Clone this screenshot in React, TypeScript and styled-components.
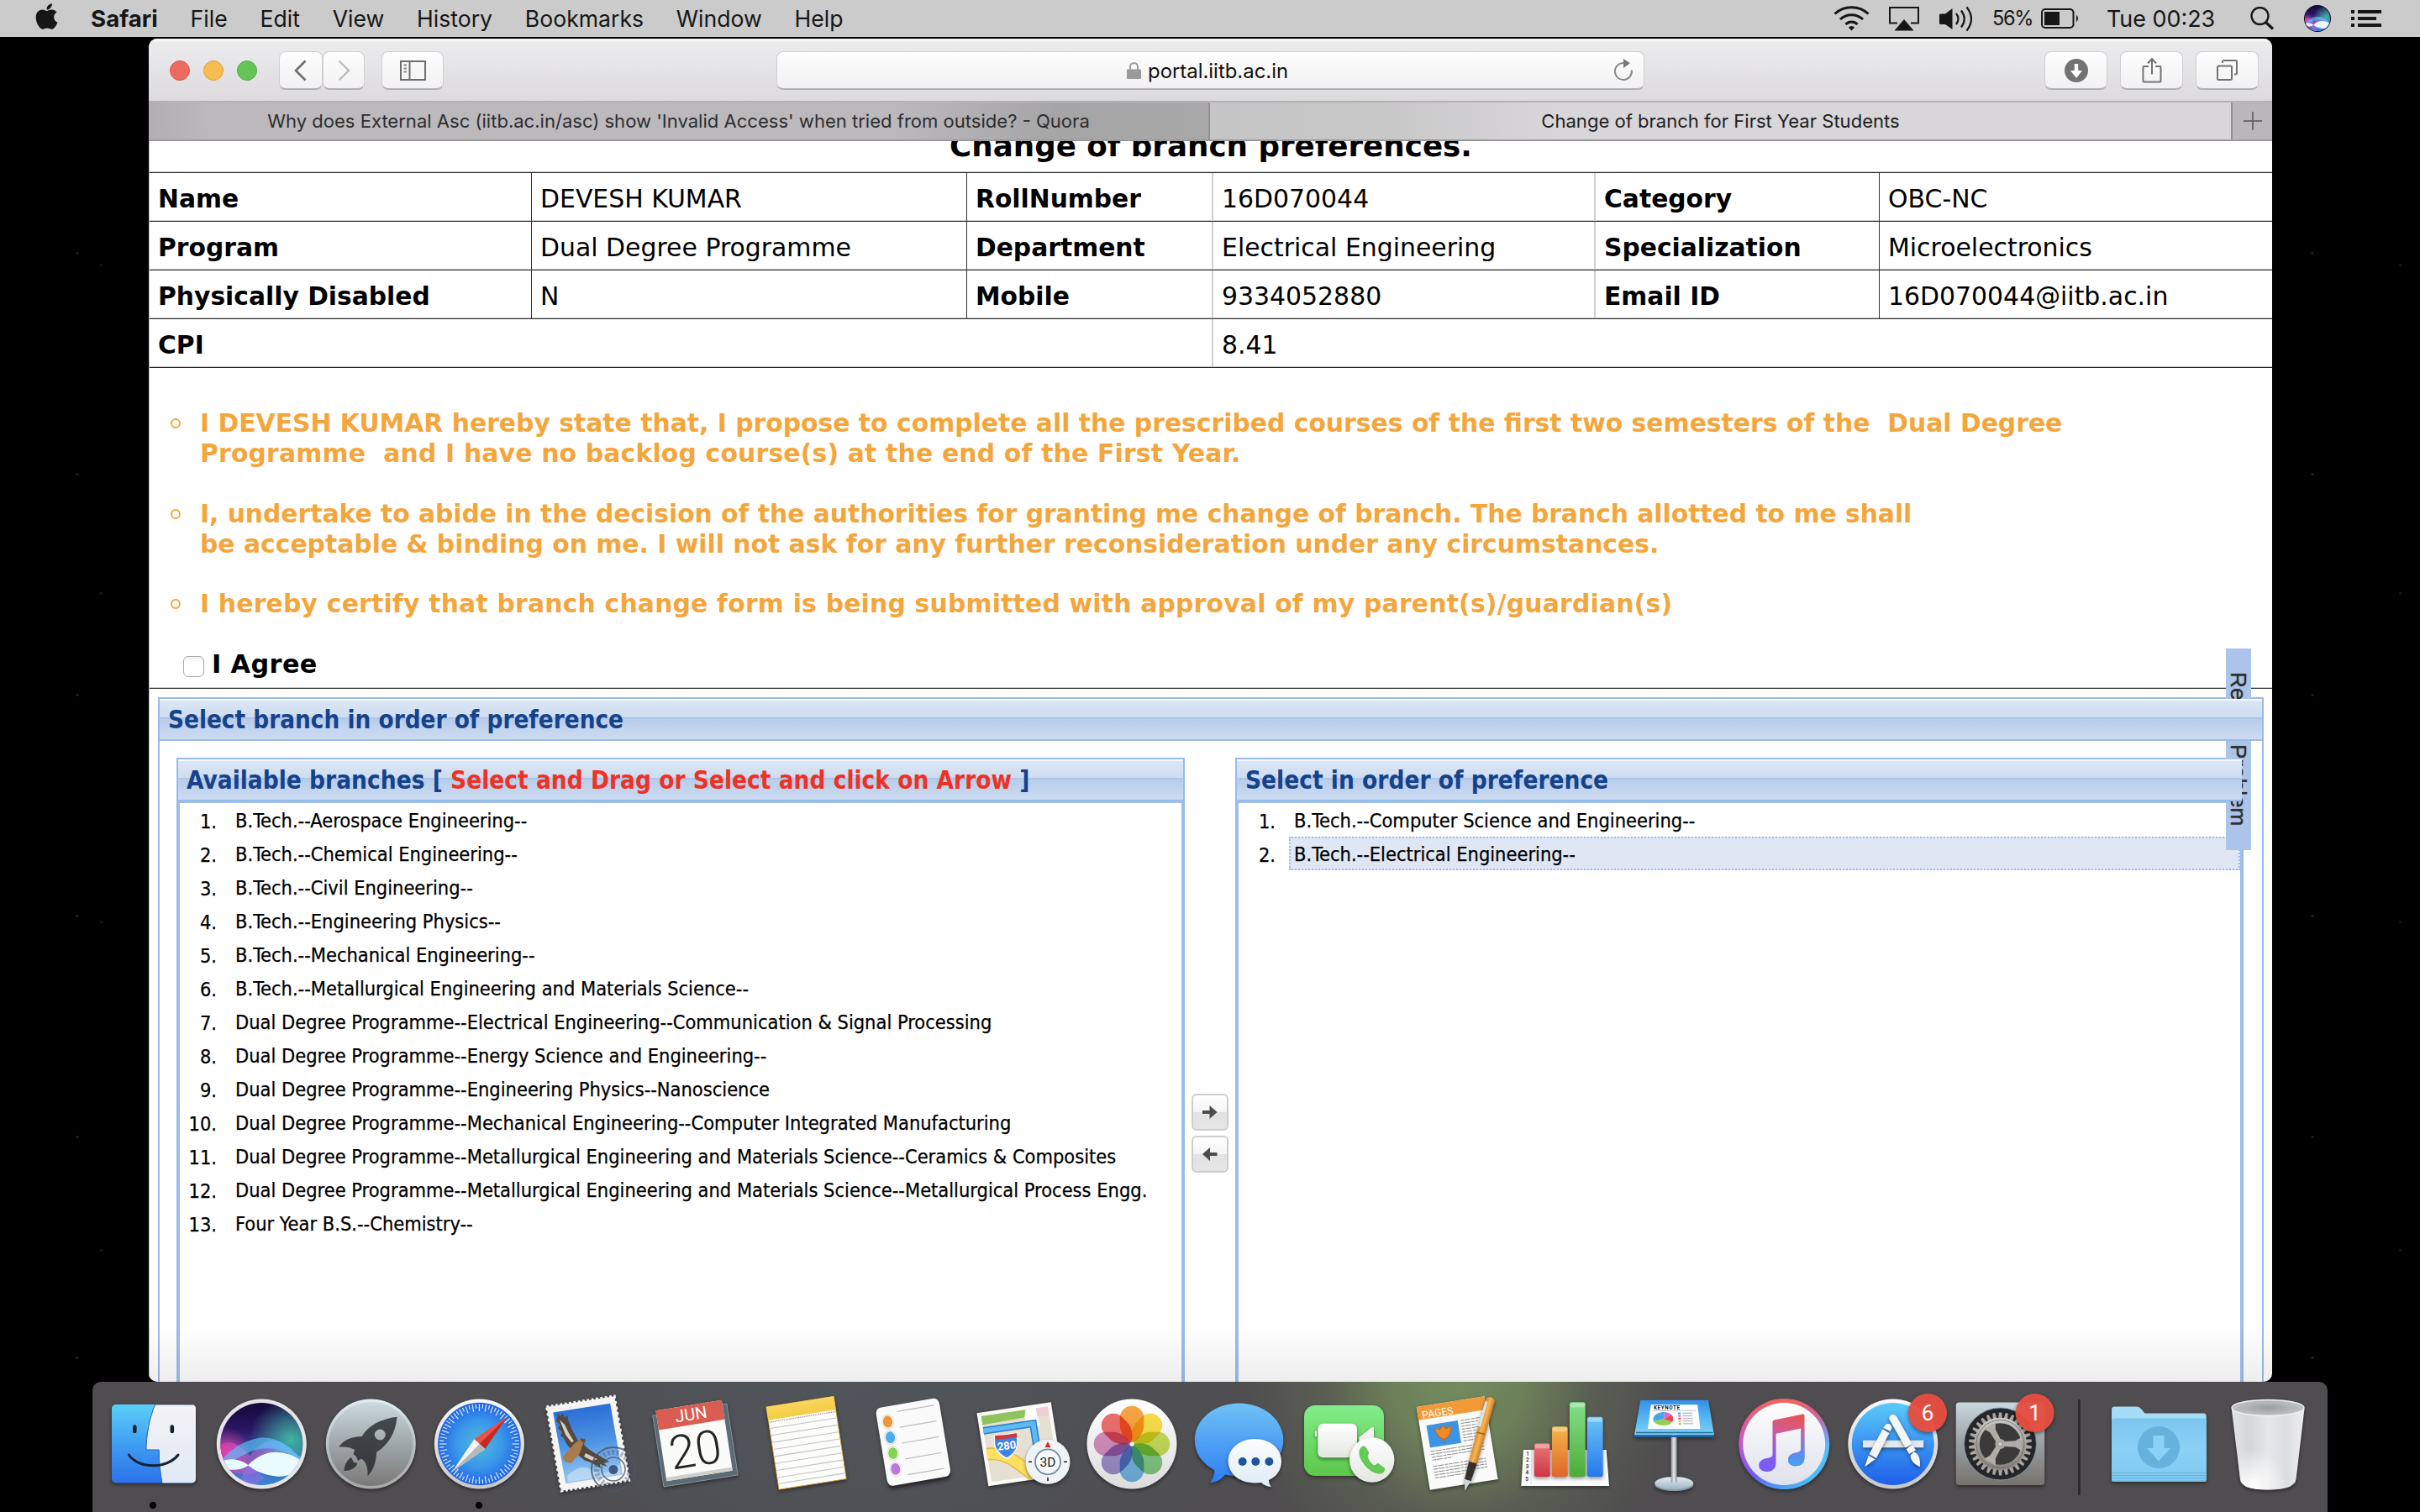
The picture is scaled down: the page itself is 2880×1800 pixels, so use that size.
import React from 'react';
import styled, { createGlobalStyle } from 'styled-components';
import { FaApple } from 'react-icons/fa';

const verdana = '"DejaVu Sans", Verdana, sans-serif';
const tahoma = '"DejaVu Sans Condensed", Tahoma, sans-serif';
const system = 'Inter, "Helvetica Neue", sans-serif';
const line = '#99bbe8';

const GlobalStyle = createGlobalStyle`
  *, *::before, *::after { box-sizing: border-box; }
  body { margin: 0; background: #000; }
`;

const Desktop = styled.div`
  width: 2880px;
  height: 1800px;
  overflow: hidden;
  display: flex;
  flex-direction: column;
  background:
    radial-gradient(circle, #1f2330 0 1px, transparent 2px) 22px 170px / 140px 263px,
    radial-gradient(circle, #101628 0 1px, transparent 2px) 35px 120px / 171px 391px,
    #000;
`;

/* ---------- menu bar ---------- */
const MenuBar = styled.header`
  flex: none;
  height: 44px;
  padding: 0 46px 0 42px;
  display: flex;
  align-items: center;
  background: #cbcbcb;
  color: #161616;
  font-family: ${system};
`;
const AppleMark = styled.span`
  width: 27px;
  display: flex;
  justify-content: center;
  font-size: 35px;
  margin: -5px 39px 0 0;
`;
const Menus = styled.nav`
  display: flex;
  gap: 38.8px;
`;
const MenuItem = styled.span<{ $app?: boolean }>`
  font-size: ${p => (p.$app ? '27.7px' : '26.6px')};
  font-weight: ${p => (p.$app ? 700 : 400)};
  line-height: 44px;
`;
const Extras = styled.div`
  margin-left: auto;
  display: flex;
  align-items: center;
`;
const Extra = styled.svg<{ $gap: number }>`
  flex: none;
  display: block;
  margin-left: ${p => p.$gap}px;
`;
const Percent = styled.span`
  width: 48px;
  margin-left: 22px;
  font-size: 23.6px;
  line-height: 44px;
  letter-spacing: -1.3px;
  white-space: nowrap;
`;
const Clock = styled.span`
  width: 131px;
  margin-left: 32px;
  margin-right: 1px;
  font-size: 26.9px;
  line-height: 44px;
  white-space: nowrap;
`;

/* ---------- browser window ---------- */
const Window = styled.main`
  flex: none;
  width: 2527px;
  height: 1599px;
  margin: 2px 0 0 177px;
  display: flex;
  flex-direction: column;
  overflow: hidden;
  border-radius: 10px;
  background: #fff;
`;
const Toolbar = styled.div`
  flex: none;
  height: 74px;
  padding: 0 16px 0 25px;
  display: flex;
  align-items: center;
  background: linear-gradient(#f8f7f8 0 2px, #ecebee 4px, #dcdadd);
`;
const Lights = styled.div`
  display: flex;
  gap: 16px;
  margin: 2px 26px 0 0;
`;
const Light = styled.i<{ $c: string; $edge: string }>`
  width: 24px;
  height: 24px;
  border-radius: 50%;
  background: ${p => p.$c};
  border: 1px solid ${p => p.$edge};
`;
const ToolButton = styled.button<{ $w: number; $mr?: number }>`
  width: ${p => p.$w}px;
  height: 46px;
  margin: 2px ${p => p.$mr ?? 0}px 0 0;
  padding: 0;
  display: flex;
  align-items: center;
  justify-content: center;
  border: 1px solid #d0ced1;
  border-bottom: 2px solid #b2b0b3;
  border-radius: 8px;
  background: linear-gradient(#fefefe, #f2f1f2);
  color: #737373;
`;
const AddressField = styled.div`
  width: 1033px;
  height: 46px;
  margin: 2px 0 0 396px;
  padding: 0 12px 0 416px;
  display: flex;
  align-items: center;
  border: 1px solid #d0ced1;
  border-bottom: 2px solid #b2b0b3;
  border-radius: 8px;
  background: linear-gradient(#fefefe, #f2f1f2);
  font: 23.9px/44px ${system};
  color: #111;
`;
const Host = styled.span`
  margin: 3px auto 0 8px;
`;
const RightTools = styled.div`
  margin-left: auto;
  display: flex;
  gap: 15px;
`;
const TabBar = styled.div`
  flex: none;
  height: 48px;
  display: flex;
  border-top: 2px solid #b3b1b4;
  border-bottom: 2px solid #9b999c;
  font: 22.05px/44px ${system};
  text-align: center;
`;
const Tab = styled.div<{ $active?: boolean }>`
  width: ${p => (p.$active ? 1217 : 1263)}px;
  border-right: 2px solid #929093;
  color: ${p => (p.$active ? '#202020' : '#2e2d2f')};
  white-space: nowrap;
  background: ${p =>
    p.$active
      ? 'linear-gradient(90deg, #c6c5c6, #c9c8c9 18%, #d8d6d9 34%, #d8d6d9)'
      : 'linear-gradient(90deg, #b1afb2, #bbb9bc 6%, #bbb9bc 70%, #a6a5a6 86%, #a9a8a9)'};
`;
const NewTab = styled.div`
  flex: 1;
  display: flex;
  align-items: center;
  justify-content: center;
  background: #b9b7ba;
`;

/* ---------- page ---------- */
const Page = styled.div`
  position: relative;
  flex: 1;
  min-height: 0;
  overflow: hidden;
  display: flex;
  flex-direction: column;
  border-left: 1px solid #b9b9b9;
  font-family: ${verdana};
  font-size: 29.9px;
  color: #000;
  &::after {
    content: '';
    position: absolute;
    z-index: 5;
    inset: auto 0 0 0;
    height: 66px;
    background: linear-gradient(rgba(60, 60, 60, 0), rgba(60, 60, 60, 0.09));
  }
`;
const TitleRow = styled.div`
  flex: none;
  height: 38px;
  display: flex;
  align-items: flex-end;
  justify-content: center;
  box-shadow: inset 0 -1px #2c2c2c, inset 0 -2px #c8c8c8;
`;
const Title = styled.h1`
  margin: 0;
  font-size: 35.7px;
  line-height: 65px;
  font-weight: 700;
`;
const InfoRow = styled.div`
  flex: none;
  height: 58px;
  display: grid;
  grid-template-columns: 455px 518px 293px 455px 338px 1fr;
  box-shadow: inset 0 -1px #2c2c2c, inset 0 -2px #c8c8c8;
`;
const Cell = styled.div<{ $rule?: 'dark' | 'light'; $span?: number }>`
  grid-column: span ${p => p.$span ?? 1};
  height: 57px;
  padding: 3px 0 0 10px;
  line-height: 56px;
  white-space: nowrap;
  border-right: ${p =>
    p.$rule === 'dark' ? '1px solid #333' : p.$rule === 'light' ? '2px solid #cfcfcf' : 'none'};
`;
const Label = styled(Cell)`
  font-weight: 700;
  font-size: 29.75px;
`;
const Pledges = styled.ul`
  flex: none;
  margin: 0;
  padding: 48px 0 0 25px;
  height: 286px;
  list-style: none;
  color: #f4a63d;
  font-weight: 700;
  font-size: 29.82px;
  line-height: 36px;
`;
const Pledge = styled.li`
  display: grid;
  grid-template-columns: 12px 1fr;
  column-gap: 23px;
  margin-bottom: 35.7px;
  white-space: pre;
  &::before {
    content: '';
    grid-row: span 2;
    width: 12px;
    height: 12px;
    margin-top: 12px;
    border: 2px solid #f4a63d;
    border-radius: 50%;
  }
`;
const PledgeLine = styled.span<{ $track?: number }>`
  grid-column: 2;
  letter-spacing: ${p => p.$track ?? 0}px;
`;
const Agree = styled.label`
  flex: none;
  height: 96px;
  padding: 42px 0 0 40px;
  display: flex;
  align-items: flex-start;
  gap: 9px;
  font-weight: 700;
  font-size: 30.3px;
  line-height: 50px;
  letter-spacing: 0.4px;
  box-shadow: inset 0 -1px #2c2c2c, inset 0 -2px #c8c8c8;
`;
const CheckBox = styled.input`
  appearance: none;
  width: 25px;
  height: 25px;
  margin: 15px 0 0;
  border: 1.5px solid #aaa;
  border-radius: 6px;
  background: linear-gradient(#f2f2f2, #fff 30%);
`;
const Outer = styled.section`
  flex: 1;
  min-height: 0;
  margin: 10px 10px 0 10px;
  display: flex;
  flex-direction: column;
  border: 2px solid ${line};
  border-bottom: 0;
`;
const PanelHead = styled.h2<{ $inner?: boolean }>`
  position: relative;
  z-index: 2;
  flex: none;
  height: 50px;
  margin: 0;
  padding-left: 10px;
  border-bottom: 2px solid ${line};
  background: linear-gradient(#f4f8fd 0 2px, #dae6f4 2px, #cfddf0 22px, #adc5e9 22px 24px, #b9cdea 24px, #ccdbf1);
  font: 700 ${p => (p.$inner ? 29.5 : 29.35)}px/51px ${tahoma};
  color: #15428b;
  white-space: pre;
`;
const Hint = styled.span`
  color: #ee3124;
`;
const Selector = styled.div`
  flex: 1;
  min-height: 0;
  display: grid;
  grid-template-columns: 1200px 60px 1200px;
  padding: 20px 0 0 20px;
`;
const Panel = styled.div`
  display: flex;
  flex-direction: column;
  border: 2px solid ${line};
  border-bottom: 0;
`;
const PanelBody = styled.div`
  flex: 1;
  border: 2px solid #9dbff0;
  border-bottom: 0;
`;
const Branch = styled.div`
  height: 40px;
  display: grid;
  grid-template-columns: 60px 1fr;
  font: 23.42px/40px ${tahoma};
  -webkit-text-stroke: 0.25px #000;
`;
const Num = styled.span`
  width: 44px;
  padding-top: 2px;
  text-align: right;
`;
const BranchName = styled.span<{ $selected?: boolean }>`
  height: 40px;
  padding-left: 4px;
  line-height: 39px;
  border: 2px dotted ${p => (p.$selected ? '#a3bae9' : 'transparent')};
  background: ${p => (p.$selected ? '#dfe7f5' : 'transparent')};
  white-space: nowrap;
`;
const Movers = styled.div`
  display: flex;
  flex-direction: column;
  align-items: center;
  gap: 6px;
  padding-top: 400px;
`;
const Mover = styled.button`
  width: 44px;
  height: 44px;
  padding: 0;
  display: flex;
  align-items: center;
  justify-content: center;
  border: 2px solid #cdcdcd;
  border-radius: 6px;
  background: linear-gradient(#fff, #f5f5f5 50%, #e2e2e2 50%, #e6e6e6);
`;
const ReportTab = styled.aside`
  position: absolute;
  z-index: 1;
  top: 604px;
  right: 25px;
  width: 30px;
  height: 240px;
  background: #adc4ea;
  writing-mode: vertical-rl;
  text-align: center;
  font: 26.2px/30px "Liberation Sans", Arial, sans-serif;
  color: #2f2f2f;
  text-shadow: 0 0 1px #2f2f2f;
`;

/* ---------- dock ---------- */
const Dock = styled.footer`
  flex: none;
  width: 2660px;
  height: 155px;
  margin: 0 0 0 110px;
  padding: 1px 6px 0 8.3px;
  display: flex;
  border-radius: 10px 10px 0 0;
  background:
    radial-gradient(ellipse 260px 260px at 1625px 0, #738b5e 0, #6d8059 30%, rgba(96, 104, 84, 0.6) 62%, transparent 100%),
    radial-gradient(ellipse 500px 300px at 900px 0, #50555b 0, transparent 100%),
    #4f4d4f;
`;
const DockItem = styled.svg<{ $w?: number }>`
  flex: none;
  display: block;
  width: ${p => p.$w ?? 129.3}px;
  height: 154px;
  overflow: visible;
  isolation: isolate;
`;
const DockRule = styled.i`
  flex: none;
  width: 3px;
  height: 114px;
  margin: 20px 29px 0 27.5px;
  background: #2b2a2c;
`;
const DockText = styled.text`
  font-family: Roboto, "Helvetica Neue", sans-serif;
  text-anchor: middle;
`;
const Shade = styled.g`
  filter: drop-shadow(0 2px 2px rgba(0, 0, 0, 0.45));
`;

const Grad = ({ id, stops, x2 = 0, y2 = 1 }: { id: string; stops: string[]; x2?: number; y2?: number }) => (
  <linearGradient id={id} x1="0" y1="0" x2={x2} y2={y2}>
    {stops.map((c, i) => (
      <stop key={i} offset={i / (stops.length - 1)} stopColor={c} />
    ))}
  </linearGradient>
);

const SiriOrb = ({ id }: { id: string }) => (
  <g>
    <defs>
      <Grad id={id + 'bg'} stops={['#120838', '#2b1566', '#35559c', '#3a8ad8']} />
      <radialGradient id={id + 'teal'} cx=".85" cy=".45" r=".5">
        <stop offset="0" stopColor="#3fb6a4" />
        <stop offset="1" stopColor="#3fb6a4" stopOpacity="0" />
      </radialGradient>
      <radialGradient id={id + 'mag'} cx=".08" cy=".6" r=".3">
        <stop offset="0" stopColor="#e23ba6" />
        <stop offset="1" stopColor="#e23ba6" stopOpacity="0" />
      </radialGradient>
      <Grad id={id + 'pk'} x2={1} y2={0} stops={['#e83fa8', '#b46ae0', '#6cc8ff']} />
      <clipPath id={id + 'c'}><circle r="49" /></clipPath>
    </defs>
    <g clipPath={`url(#${id}c)`}>
      <rect x="-50" y="-50" width="100" height="100" fill={`url(#${id}bg)`} />
      <rect x="-50" y="-50" width="100" height="100" fill={`url(#${id}teal)`} />
      <rect x="-50" y="-50" width="100" height="100" fill={`url(#${id}mag)`} />
      <path d="M-50 2C-34-8-24 4-14 14 0-4 16-10 30 2 40 10 46 16 50 18V34C30 22 8 24-6 34-22 40-38 34-50 24Z" fill={`url(#${id}pk)`} opacity=".6" />
      <path d="M-50 24C-40 6-20-4-4-7 18-10 36 4 50 22 34 10 12 0-10 8-26 14-38 24-50 24Z" fill="#5cc4ff" opacity=".65" />
      <path d="M-50 22C-40 16-26 17-16 25-4 14 6 9 20 10 34 11 42 16 50 22V26C40 38 24 40 14 38 2 36-8 32-16 26-26 32-38 32-50 28Z" fill="#e9fbff" />
      <path d="M-16 25L4 40-10 50-30 50Z" fill="#9a6ce8" opacity=".6" />
    </g>
  </g>
);

/* Angles of the ticks, petals and teeth drawn around a centre. */
const around = (n: number) => Array.from({ length: n }, (_, i) => (360 / n) * i);

const Finder = () => (
  <DockItem viewBox="0 0 129.3 154">
    <defs>
      <Grad id="fl" stops={['#5bcff8', '#3f9ef2', '#2b70ea']} />
      <Grad id="fr" stops={['#f4f3f5', '#dfe9f5']} />
      <clipPath id="fc"><rect x="15" y="26" width="100" height="93.5" rx="5" /></clipPath>
    </defs>
    <Shade>
      <g clipPath="url(#fc)">
        <rect x="15" y="26" width="100" height="94" fill="url(#fl)" />
        <path d="M66.6 26C60 42 56 62 56 80H71.2C71 94 73 108 75 120H116V26Z" fill="url(#fr)" stroke="#2b5fae" strokeWidth="1" />
      </g>
      <path d="M42.3 52.500V58M86.800 52.500V58" stroke="#16222e" strokeWidth="4.600" strokeLinecap="round" />
      <path d="M35.400 86C47 103 81 103 94 86" fill="none" stroke="#16222e" strokeWidth="3" strokeLinecap="round" />
    </Shade>
    <circle cx="64" cy="146" r="4" fill="#000" />
  </DockItem>
);

const Siri = () => (
  <DockItem viewBox="0 0 129.3 154">
    <Shade><circle cx="63.300" cy="73" r="53.500" fill="#e6e4e8" /></Shade>
    <g transform="translate(63.3 73)"><SiriOrb id="sd" /></g>
  </DockItem>
);

const Launchpad = () => (
  <DockItem viewBox="0 0 129.3 154">
    <defs>
      <Grad id="lr" stops={['#dfeef2', '#b9c3c7', '#a8a8a8']} />
      <Grad id="lb" stops={['#ccd9de', '#9fa7aa', '#7b7977']} />
      <Grad id="lk" stops={['#43494c', '#34383a']} />
    </defs>
    <Shade><circle cx="64.300" cy="73" r="53.500" fill="url(#lr)" /></Shade>
    <circle cx="64.300" cy="73" r="50" fill="url(#lb)" />
    <path fillRule="evenodd" fill="url(#lk)" d="M95.500 40.700C77 43 62 50 53.700 64 41 64 31 69 26 77 33 76 40 77 45 80L43.500 85 47 88 49 93 53 90.500 57 94C60 99 61 105 60.600 111 67 105 71 94 71 83 85 74 94 60 95.500 40.700ZM75.300 55.500a6.500 6.500 0 1 1 0 13 6.500 6.500 0 0 1 0-13Z" />
    <path d="M41 89C36 92 33 98 32.500 105 40 105 46 102 48.500 96L44 95Z" fill="#383c3e" />
  </DockItem>
);

const SafariIcon = () => (
  <DockItem viewBox="0 0 129.3 154">
    <defs>
      <radialGradient id="sb"><stop offset="0" stopColor="#4fb9d8" /><stop offset=".55" stopColor="#3a98ea" /><stop offset="1" stopColor="#2263e4" /></radialGradient>
      <Grad id="sr" stops={['#fafafa', '#c8c6c9']} />
    </defs>
    <Shade><circle cx="64.400" cy="73" r="53.500" fill="url(#sr)" /></Shade>
    <circle cx="64.400" cy="73" r="49.300" fill="url(#sb)" />
    <g transform="translate(64.4 73)" stroke="#dbeefc" strokeWidth="1.200">
      {around(72).map((a, i) => <path key={a} d={i % 2 ? 'M0-47.500V-42.500' : 'M0-47.500V-39'} transform={`rotate(${a})`} />)}
    </g>
    <path d="M97.500 40.700L58.400 67.300 71.300 79Z" fill="#e9514a" />
    <path d="M97.500 40.700L64.800 73 71.300 79Z" fill="#c32a24" />
    <path d="M32.300 105.700L58.400 67.300 71.300 79Z" fill="#f4f4f4" />
    <path d="M32.300 105.700L64.800 73 71.300 79Z" fill="#b5b8ba" />
    <circle cx="64" cy="146" r="4" fill="#000" />
  </DockItem>
);

const Mail = () => (
  <DockItem viewBox="0 0 129.3 154">
    <defs><Grad id="ms" stops={['#2a6fd6', '#4f94e4', '#9cc9f0']} /></defs>
    <Shade>
      <g transform="matrix(.808 -.127 .175 .997 15.500 29)">
        <rect width="100" height="100" fill="#f6f5f4" stroke="#f6f5f4" strokeWidth="3.500" strokeDasharray="3.400 3.200" />
        <rect x="8" y="7.500" width="84" height="85" fill="url(#ms)" />
        <path d="M12 84Q35 70 50 82T90 80V91H12Z" fill="#cfe4f7" opacity=".6" />
      </g>
      <path d="M28 42L29 36 32 41 34 36 37 42 40 39 42 47C46 56 49 63 53 69L57 66 61 68 60 74C67 82 78 86 90 94L84 96 88 100 79 97 80 102 70 96 60 92 52 85 46 80C40 76 38 70 36 66L32 63 34 59 29 54 32 50 27 46Z" fill="#55483d" />
      <path d="M31 44L37 50 42 60 48 70 45 71 38 62ZM62 84L76 91 70 93 60 88Z" fill="#d9cfc0" />
      <path d="M49 72L56 67 61 68.500 58 75 55 84 50 90 44 96 38 94 34 89 40 82Z" fill="#a87c4c" />
      <path d="M55 67.500L61 67 62 70 58 71Z" fill="#6d4a2a" />
    </Shade>
    <g fill="none" stroke="#4d5565" opacity=".8">
      <circle cx="95" cy="103" r="26" strokeWidth="2" />
      <circle cx="95" cy="103" r="14" strokeWidth="1.500" />
      <circle cx="95" cy="103" r="20" strokeWidth="6" strokeDasharray="3 2.400" opacity=".5" />
    </g>
    <circle cx="95" cy="103.500" r="5.500" fill="#3f5a80" />
  </DockItem>
);

const Calendar = () => (
  <DockItem viewBox="0 0 129.3 154">
    <Shade>
      <path d="M11.700 39L99.900 25 113.200 110 25 124Z" fill="#5c6b73" stroke="#8497a0" />
      <g transform="matrix(.785 -.126 .129 .84 15.400 33.300)">
        <rect width="100" height="100" fill="#fbfbfa" />
        <rect y="95" width="100" height="5" fill="#cfcfce" />
        <rect width="100" height="27.500" fill="#d95d52" />
      </g>
    </Shade>
    <DockText transform="translate(58.500 44.500) rotate(-9)" fontSize="20" fill="#fff">JUN</DockText>
    <DockText transform="translate(65.500 99) rotate(-9)" fontSize="56" fontWeight="300" fill="#252525">20</DockText>
  </DockItem>
);

const Notes = () => (
  <DockItem viewBox="0 0 129.3 154">
    <defs><Grad id="ny" stops={['#f8d85e', '#f6cb45']} /></defs>
    <Shade>
      <g transform="matrix(.803 -.127 .151 .983 17.900 29)">
        <rect width="100" height="100" fill="#fcfcfb" stroke="#c89b23" strokeWidth="1" />
        <rect width="100" height="16" fill="url(#ny)" />
        <path d="M1 18.500H99" stroke="#777" strokeWidth="1.200" strokeDasharray="1.200 1.500" />
        {[26, 34.5, 43, 51.500, 60, 68.500, 77, 85.500, 93].map(y => <path key={y} d={`M1 ${y}H99`} stroke="#c3c3c3" strokeWidth="1.100" />)}
      </g>
    </Shade>
  </DockItem>
);

const reminderColors = ['#ef9537', '#4bacf2', '#83d454', '#bd78dd'];
const Reminders = () => (
  <DockItem viewBox="0 0 129.3 154">
    <Shade>
      <g transform="matrix(.753 -.13 .155 .94 18.500 30.700)">
        <rect y="1.500" width="100" height="100" rx="8" fill="#2b2a2c" />
        <rect width="100" height="99" rx="8" fill="#fafafa" />
        <path d="M33 8.500H91" stroke="#bdbdbd" strokeWidth="1.300" />
        {reminderColors.map((c, i) => (
          <g key={c}>
            <circle cx="16" cy={19 + i * 20} r="9.500" fill="#dcdcdc" />
            <circle cx="16" cy={19 + i * 20} r="7.800" fill={c} stroke="#fff" strokeWidth="1" />
            <path d={`M33 ${28.500 + i * 20}H91`} stroke="#bdbdbd" strokeWidth="1.300" />
          </g>
        ))}
      </g>
    </Shade>
  </DockItem>
);

const Maps = () => (
  <DockItem viewBox="0 0 129.3 154">
    <Shade>
      <g transform="matrix(.882 -.13 .138 .87 9.500 36.300)">
        <rect width="100" height="100" fill="#fbfaf8" />
        <rect x="5" y="5" width="90" height="90" fill="#e6e0d2" />
        <path d="M5 5H65V15L5 17Z" fill="#8fc35b" />
        <path d="M65 5H80V30H62V15Z" fill="#fff" />
        <rect x="79" y="5" width="16" height="12" fill="#f1cdd5" />
        <path d="M5 25H72V95" fill="none" stroke="#2c7ccb" strokeWidth="10" />
        <path d="M5 25H72V95" fill="none" stroke="#5dbaf4" strokeWidth="6.500" />
        <path d="M5 57C28 57 42 72 62 95" fill="none" stroke="#e8b93a" strokeWidth="17" />
        <path d="M5 57C28 57 42 72 62 95" fill="none" stroke="#fbe063" strokeWidth="14" />
      </g>
      <path d="M31 63Q44 63 57 60 60 76 54 83 49 89 44.500 90 37 86 33 80 29 74 31 63Z" fill="#3f82e6" stroke="#fff" strokeWidth="1.500" />
      <path d="M31 63Q44 63 57 60L57.500 65 31.500 68Z" fill="#d0393b" />
    </Shade>
    <DockText transform="translate(45.500 79.500) rotate(-7)" fontSize="13" fontWeight="700" fill="#fff">280</DockText>
    <Shade><circle cx="94" cy="94.300" r="26.500" fill="#f0f3f6" /></Shade>
    <circle cx="94" cy="94.300" r="15" fill="#f6f8fa" stroke="#6d8ca0" strokeWidth="1.800" />
    <path d="M94 70L90.500 77H97.500Z" fill="#d8281f" />
    <path d="M71 94.300H75M113 94.300H117M94 113V117" stroke="#222" strokeWidth="1.600" />
    <DockText x="94" y="100" fontSize="15.500" fill="#222">3D</DockText>
  </DockItem>
);

const petals = ['#f9a545', '#fbe04a', '#c9de5b', '#86cc86', '#78b8e6', '#a191cf', '#d791c0', '#f0706d'];
const Petal = styled.path`
  mix-blend-mode: multiply;
`;
const Photos = () => (
  <DockItem viewBox="0 0 129.3 154">
    <defs><Grad id="pw" stops={['#ffffff', '#dcdcdc']} /></defs>
    <Shade><circle cx="65" cy="73" r="53.500" fill="url(#pw)" /></Shade>
    <g transform="translate(65 73)">
      {petals.map((c, i) => (
        <Petal key={c} d="M0-1C-8-6-14.300-13-14.300-22V-31a14.300 14.300 0 0 1 28.600 0V-22C14.300-13 8-6 0-1Z" fill={c} transform={`rotate(${i * 45})`} />
      ))}
      <circle r="2.500" fill="#fff" />
    </g>
  </DockItem>
);

const Messages = () => (
  <DockItem viewBox="0 0 129.3 154">
    <defs><Grad id="mb" stops={['#6fc2f6', '#2f7ef3']} /><Grad id="mw" stops={['#fdfdfe', '#dfebf6']} /></defs>
    <Shade>
      <path d="M63.500 24.500C93 24.500 116.300 44 116.300 68.500S93 111 63.500 111C57 111 52 111 47 109.500 43 115 36 119 29 119 33 114 35 108 34 104 19 96 10.800 83 10.800 68.500 10.800 44 34 24.500 63.500 24.500Z" fill="url(#mb)" />
    </Shade>
    <Shade>
      <path d="M82.400 67C100 67 114 78 114 93.500 114 104 108 112 99 116 99 119 100 122 102 124 97 124 92 121 90 119 64 122 50.700 108 50.700 93.500 50.700 78 65 67 82.400 67Z" fill="url(#mw)" />
    </Shade>
    <g fill="#1f5499"><circle cx="67.700" cy="94" r="5" /><circle cx="83.300" cy="94" r="5" /><circle cx="99.400" cy="94" r="5" /></g>
  </DockItem>
);

const FaceTime = () => (
  <DockItem viewBox="0 0 129.3 154">
    <defs><Grad id="fg" stops={['#83ed8b', '#5cc749']} /><Grad id="fw" stops={['#ffffff', '#e3e6e0']} /></defs>
    <Shade><rect x="11" y="27" width="95" height="84" rx="13" fill="url(#fg)" /></Shade>
    <Shade>
      <rect x="27.400" y="48.700" width="46.500" height="40.500" rx="6" fill="url(#fw)" />
      <path d="M24 57.500H26V64H24ZM76.500 65L91 53.500 94 53V88L76.500 74Z" fill="#f4f5f3" />
    </Shade>
    <Shade><circle cx="91.700" cy="92" r="26.700" fill="url(#fw)" /></Shade>
    <path d="M79.500 77C76 80 76 86 80 93 85 102 94 108 101 108 105 108 107 105 106.500 102L99 96.500C97 97 96 99 94.500 99 91 98 86.500 91 86 87 86.500 85.500 88 84.500 87.500 83L83.500 76.500C82 75.500 80.500 76 79.500 77Z" fill="#62cc54" stroke="#4bae3f" strokeWidth=".8" />
  </DockItem>
);

const Pages = () => (
  <DockItem viewBox="0 0 129.3 154">
    <defs><Grad id="pp" x2={1} y2={0} stops={['#d9872a', '#f7b657', '#cf7a1f']} /></defs>
    <Shade>
      <g transform="matrix(.808 -.127 .161 .987 15.700 29)">
        <rect width="100" height="100" fill="#fbfbfb" />
        <rect width="100" height="16" fill="#f29a38" />
        <rect x="10" y="23.500" width="46" height="27" fill="#3d94e2" />
        <path d="M33 43C24 41 21 33 22 28L28 31 33 27 38 31 44 28C45 34 42 41 33 43V49" fill="#f08a24" stroke="#c9641a" />
        {[24, 27.500, 31, 34.500, 38, 41.500, 45, 48.500].map((y, i) => <path key={y} d={`M60 ${y}H${88 - (i % 3) * 3}`} stroke="#8b8b8b" strokeWidth="1" strokeDasharray="5 1 8 1.500" />)}
        {[55, 58.500, 62, 65.500, 73, 76.500, 80, 83.500, 87].map((y, i) => <path key={y} d={`M10 ${y}H${i === 3 ? 40 : i === 8 ? 52 : 88}`} stroke="#8b8b8b" strokeWidth="1" strokeDasharray="6 1 9 1.500 4 1" />)}
      </g>
    </Shade>
    <DockText transform="translate(41.500 40) rotate(-9)" fontSize="12.200" fill="#fff">PAGES</DockText>
    <Shade>
      <g transform="translate(104.500 18) rotate(16)">
        <path d="M-5.500 2Q0-3 5.500 2V80H-4.500Z" fill="url(#pp)" />
        <path d="M-4.500 80H5.500L4.200 102H-3.500Z" fill="#34302e" />
        <path d="M-3.500 102H4.200L.5 115Z" fill="#cfd6db" />
        <rect x="-5.500" y="6" width="3" height="31" fill="#d8e6ee" />
        <path d="M-5 44H5.500" stroke="#a8620f" strokeWidth="1.500" />
      </g>
    </Shade>
  </DockItem>
);

const bars = [
  { x: 26.900, y: 72.300, a: '#e8787a', b: '#cf3542' },
  { x: 47.900, y: 52.300, a: '#f3b54a', b: '#e0652a' },
  { x: 68.900, y: 23.300, a: '#83e08c', b: '#4fab35' },
  { x: 89.800, y: 40.700, a: '#6cc4f7', b: '#2478ec' },
];
const Numbers = () => (
  <DockItem viewBox="0 0 129.3 154">
    <defs>{bars.map((b, i) => <Grad key={i} id={'bar' + i} stops={[b.a, b.b]} />)}</defs>
    <Shade><path d="M14 80H112.700L116 123H11.300Z" fill="#fbfbfb" /><path d="M24 80L23 121" stroke="#ddd" /></Shade>
    <Shade>
      {bars.map((b, i) => (
        <g key={i}>
          <rect x={b.x} y={b.y} width="18.800" height={112 - b.y} rx="2.500" fill={`url(#bar${i})`} />
          <rect x={b.x + 1} y={b.y + 1} width="16.800" height="5" rx="1.500" fill="#fff" opacity=".35" />
        </g>
      ))}
    </Shade>
    {[1, 2, 3, 4, 5].map(n => <DockText key={n} x={19.500 - n * 0.300} y={79.500 + n * 7.500} fontSize="6.500" fontWeight="700" fill="#444">{n}</DockText>)}
  </DockItem>
);

const Keynote = () => (
  <DockItem viewBox="0 0 129.3 154">
    <defs>
      <Grad id="kb" stops={['#338fe8', '#54b5f2', '#82d0f6']} />
      <Grad id="kp" x2={1} y2={0} stops={['#8f9496', '#e6e8ea', '#8f9496']} />
      <Grad id="ke" stops={['#e2edf5', '#9fb4c2']} />
    </defs>
    <Shade>
      <ellipse cx="64.300" cy="121.500" rx="23" ry="7.500" fill="#8b9ba6" />
      <ellipse cx="64.300" cy="119.500" rx="23" ry="7.500" fill="url(#ke)" />
      <rect x="60.600" y="60" width="7" height="59" fill="url(#kp)" />
      <path d="M17 62.300H112V65H17Z" fill="#1e5f9f" />
      <path d="M24.300 20.700H105L112 62.300H17Z" fill="url(#kb)" />
      <path d="M19 59.500H110.500" stroke="#226d9c" strokeWidth="1.500" />
    </Shade>
    <path d="M36.700 26.300H92.300L95.500 55H33Z" fill="#fafcfd" />
    <path d="M39 33.500H91" stroke="#ccc" />
    <DockText x="55.500" y="32.400" fontSize="6.300" fontWeight="700" textLength="31" fill="#222">KEYNOTE</DockText>
    <path d="M52 43.500L40 46A12.500 8.500 0 0 1 53 35Z" fill="#45a6ea" />
    <path d="M52 43.500L53 35A13 8.500 0 0 1 61 38Z" fill="#d16bd8" />
    <path d="M52 43.500L61 38A10 8 0 0 1 62 47Z" fill="#e64c54" />
    <path d="M52 43.500L62 47A12.500 8.500 0 0 1 40 46Z" fill="#93d04e" />
    {['#45a6ea', '#d16bd8', '#e64c54', '#f2c13c', '#93d04e'].map((c, i) => (
      <g key={c}><rect x={69 + i * 0.200} y={35.500 + i * 3.100} width="3" height="2" fill={c} /><rect x={74 + i * 0.300} y={35.700 + i * 3.100} width="12" height="1.300" fill="#b9bec2" /></g>
    ))}
  </DockItem>
);

const ITunes = () => (
  <DockItem viewBox="0 0 129.3 154">
    <defs>
      <linearGradient id="ir" x1=".5" y1="0" x2=".6" y2="1"><stop offset="0" stopColor="#f0655e" /><stop offset=".45" stopColor="#c557c9" /><stop offset=".8" stopColor="#6d5cf3" /><stop offset="1" stopColor="#45a8f8" /></linearGradient>
      <radialGradient id="ic" cx="1" cy=".75" r=".6"><stop offset="0" stopColor="#4cc3f8" /><stop offset=".4" stopColor="#4cc3f8" stopOpacity=".9" /><stop offset="1" stopColor="#4cc3f8" stopOpacity="0" /></radialGradient>
      <Grad id="iw" stops={['#fefefe', '#dfe1ec']} />
      <linearGradient id="inn" gradientUnits="userSpaceOnUse" x1="80" y1="37" x2="62" y2="106"><stop offset="0" stopColor="#e8544f" /><stop offset=".35" stopColor="#cf5d95" /><stop offset=".7" stopColor="#8a5ae6" /><stop offset="1" stopColor="#7a5df5" /></linearGradient>
      <linearGradient id="inb" gradientUnits="userSpaceOnUse" x1="86" y1="50" x2="86" y2="96"><stop offset="0" stopColor="#4a9df0" stopOpacity="0" /><stop offset="1" stopColor="#4a9df0" /></linearGradient>
    </defs>
    <Shade><circle cx="65.200" cy="73" r="54" fill="url(#ir)" /></Shade>
    <circle cx="65.200" cy="73" r="54" fill="url(#ic)" />
    <circle cx="65.200" cy="73" r="49" fill="url(#iw)" />
    <path d="M51.500 46.500Q51.500 44.800 53.500 44.400L87.500 37.600Q89.500 37.400 89.500 39.300V89C89.500 95 86 99.300 79 99.300 73.500 99.300 70 96.500 70 92 70 87.500 73.500 84.500 79 83.500 84 82.700 85.200 81.500 85.200 78.500V54.500L55.500 60.700V96C55.500 102 51 106 45 106 39 106 35.200 103 35.200 98.500 35.200 94 39 91 44 90 49.500 89.200 51.500 88.500 51.500 85.500Z" fill="url(#inn)" />
    <path d="M89.500 52V89C89.500 95 86 99.300 79 99.300 73.500 99.300 70 96.500 70 92 70 87.500 73.500 84.500 79 83.500 84 82.700 85.200 81.500 85.200 78.500V54.500Z" fill="url(#inb)" />
  </DockItem>
);

const AlertBadge = ({ x, n }: { x: number; n: number }) => (
  <g>
    <Shade><circle cx={x} cy="36" r="23" fill="#e94f42" fillOpacity=".95" /></Shade>
    <DockText x={x} y="45" fontSize="26" fill="#fff">{n}</DockText>
  </g>
);

const AppStore = () => (
  <DockItem viewBox="0 0 129.3 154">
    <defs><Grad id="ab" stops={['#5bcbf9', '#3a93f2', '#1f5fe8']} /><Grad id="aw" stops={['#fafafa', '#c7c6c8']} /></defs>
    <Shade><circle cx="65.800" cy="73" r="53.500" fill="url(#aw)" /></Shade>
    <circle cx="65.800" cy="73" r="49" fill="url(#ab)" />
    <Shade><rect x="29.900" y="68.700" width="72.300" height="8.600" fill="#e3e8ee" /></Shade>
    <Shade>
      <path d="M55.700 51.500Q57.500 48 61.500 49.200 65.500 51.500 64 55L62.500 58 54.300 53.800Z" fill="#f8f8f8" />
      <path d="M53.300 55.500L61.500 60 46 90 37.500 85.200Z" fill="#f4f5f6" />
      <path d="M36.700 86.800L44.700 91.200 32.200 100.200Z" fill="#f8f8f8" />
      <path d="M61.300 43.500Q60.500 39.500 64.500 38 68.500 37.300 70.300 40.500L88.500 72.800 80.500 77.200Z" fill="#f4f5f6" />
      <path d="M81.500 79L89.300 74.600 93 80.500 85 85Z" fill="#f8f8f8" />
      <path d="M86.500 86.500L90.500 82.500C96 84 98.500 90 98 100 92 98 87 94 86.500 86.500Z" fill="#f4f5f6" />
    </Shade>
    <AlertBadge x={107} n={6} />
  </DockItem>
);

const Preferences = () => (
  <DockItem viewBox="0 0 129.3 154">
    <defs>
      <Grad id="qb" stops={['#c9d8de', '#9a9fa1', '#77736f']} />
      <Grad id="qg" stops={['#c9c9c7', '#a5a19c', '#8b867f']} />
    </defs>
    <Shade><rect x="11.700" y="23.500" width="105.500" height="98.500" rx="4" fill="url(#qb)" /></Shade>
    <circle cx="64.500" cy="73" r="43" fill="#252628" stroke="#8aa0b0" strokeWidth=".8" />
    <g transform="translate(64.5 73)">
      <g fill="#a9a6a2">
        {around(30).map(a => <path key={a} d="M-2.400-30L-1.500-37.500H1.500L2.400-30Z" transform={`rotate(${a})`} />)}
      </g>
      <circle r="28" fill="#3a3a3a" stroke="url(#qg)" strokeWidth="6.500" />
      <circle r="28.500" fill="none" stroke="#6a6763" strokeWidth=".8" />
      {[90, 210, 330].map(a => <path key={a} d="M-2.800 0L-3.800-18-8-25H8L3.800-18 2.800 0Z" transform={`rotate(${a})`} fill="#b0ada9" />)}
      <circle r="6" fill="#b0ada9" />
      <circle r="3" fill="#c9cacb" stroke="#777" strokeWidth=".8" />
    </g>
    <AlertBadge x={105.600} n={1} />
  </DockItem>
);

const Downloads = () => (
  <DockItem viewBox="0 0 130 154" $w={130}>
    <defs><Grad id="dg" stops={['#7cc6ee', '#8bd1f6', '#7fc9f0']} /></defs>
    <Shade>
      <path d="M8 32Q8 28.500 11.500 28.500H38Q41 28.500 43 31L47.500 36.500H117.500Q120.700 36.500 120.700 40V115Q120.700 117.700 118 117.700H11Q8 117.700 8 115Z" fill="#a5dcf8" />
    </Shade>
    <path d="M8 46Q8 42.500 11 42.500H118Q120.700 42.500 120.700 46V115Q120.700 117.700 118 117.700H11Q8 117.700 8 115Z" fill="url(#dg)" />
    <path d="M8 107.500H120.700M8 110.500H120.700M8 113.500H120.700M8 117H120.700" stroke="#62aeda" strokeWidth="1" opacity=".8" />
    <circle cx="64" cy="77" r="25" fill="#66b2dc" />
    <path d="M57.500 63H70.500V78H78L64 93.500 50 78H57.500Z" fill="#8bd1f6" />
  </DockItem>
);

const Trash = () => (
  <DockItem viewBox="0 0 130 154" $w={130}>
    <defs>
      <Grad id="tb" x2={1} y2={0} stops={['#e4e4e4', '#d5d6d8', '#e6e7e9', '#dcdde0', '#efefef']} />
      <radialGradient id="ti"><stop offset="0" stopColor="#9d9ea0" /><stop offset="1" stopColor="#c0c1c3" /></radialGradient>
      <radialGradient id="tg" cx=".3" cy=".95" r=".45"><stop offset="0" stopColor="#fff" /><stop offset="1" stopColor="#fff" stopOpacity="0" /></radialGradient>
    </defs>
    <Shade>
      <path d="M20.700 31L31 115Q32 127.500 64 127.500T97.500 115L107.500 31Z" fill="url(#tb)" />
      <path d="M20.700 31L31 115Q32 127.500 64 127.500T97.500 115L107.500 31Z" fill="url(#tg)" />
      <ellipse cx="64" cy="30" rx="43" ry="9.500" fill="url(#ti)" stroke="#efefef" strokeWidth="1.500" />
    </Shade>
  </DockItem>
);

const StatusIcons = () => (
  <>
    <Extra $gap={0} width="43" height="30" viewBox="0 0 43 30" fill="none" stroke="#161616" strokeWidth="3">
      <path d="M1.500 9.500C12.500-1 30.500-1 41.500 9.500M8 16C15.500 9 27.500 9 35 16M14.500 22C18.500 18 24.500 18 28.500 22" />
      <path d="M17.800 25.500L21.500 29.500 25.200 25.500Q21.500 22.500 17.800 25.500Z" fill="#161616" stroke="none" />
    </Extra>
    <Extra $gap={23} width="36" height="29" viewBox="0 0 36 29">
      <path d="M10 19.500H1V1H35V19.500H26" fill="none" stroke="#161616" strokeWidth="2" />
      <path d="M18 15L29.500 28.500H6.500Z" fill="#161616" />
    </Extra>
    <Extra $gap={24} width="41" height="31" viewBox="0 0 41 31">
      <path d="M0 11Q0 9.500 1.500 9.500H7L15.500 3V28L7 22H1.500Q0 22 0 20.500Z" fill="#161616" />
      <path d="M20 9Q25 15.500 20 22M26 5.500Q33.500 15.500 26 25.500M32.500 1.500Q43.500 15.500 32.500 29.500" fill="none" stroke="#161616" strokeWidth="2.200" />
    </Extra>
  </>
);

const available = [
  'B.Tech.--Aerospace Engineering--',
  'B.Tech.--Chemical Engineering--',
  'B.Tech.--Civil Engineering--',
  'B.Tech.--Engineering Physics--',
  'B.Tech.--Mechanical Engineering--',
  'B.Tech.--Metallurgical Engineering and Materials Science--',
  'Dual Degree Programme--Electrical Engineering--Communication & Signal Processing',
  'Dual Degree Programme--Energy Science and Engineering--',
  'Dual Degree Programme--Engineering Physics--Nanoscience',
  'Dual Degree Programme--Mechanical Engineering--Computer Integrated Manufacturing',
  'Dual Degree Programme--Metallurgical Engineering and Materials Science--Ceramics & Composites',
  'Dual Degree Programme--Metallurgical Engineering and Materials Science--Metallurgical Process Engg.',
  'Four Year B.S.--Chemistry--',
];
const chosen = ['B.Tech.--Computer Science and Engineering--', 'B.Tech.--Electrical Engineering--'];
const rows = [
  ['Name', 'DEVESH KUMAR', 'RollNumber', '16D070044', 'Category', 'OBC-NC'],
  ['Program', 'Dual Degree Programme', 'Department', 'Electrical Engineering', 'Specialization', 'Microelectronics'],
  ['Physically Disabled', 'N', 'Mobile', '9334052880', 'Email ID', '16D070044@iitb.ac.in'],
];

const App = () => (
  <Desktop>
    <GlobalStyle />
    <MenuBar>
      <AppleMark><FaApple /></AppleMark>
      <Menus>
        <MenuItem $app>Safari</MenuItem>
        {['File', 'Edit', 'View', 'History', 'Bookmarks', 'Window', 'Help'].map(m => <MenuItem key={m}>{m}</MenuItem>)}
      </Menus>
      <Extras>
        <StatusIcons />
        <Percent>56%</Percent>
        <Extra $gap={10} width="46" height="24" viewBox="0 0 46 24">
          <rect x="1" y="1" width="37.500" height="22" rx="4" fill="none" stroke="#161616" strokeWidth="2" />
          <rect x="4" y="4" width="18" height="16" fill="#161616" />
          <path d="M42 7.500Q46 12 42 16.500Z" fill="#161616" />
        </Extra>
        <Clock>Tue 00:23</Clock>
        <Extra $gap={39} width="29" height="28" viewBox="0 0 29 28" fill="none" stroke="#161616">
          <circle cx="11.500" cy="11" r="10" strokeWidth="2.300" />
          <path d="M18.500 18.500L27 26.500" strokeWidth="3.400" />
        </Extra>
        <Extra $gap={35} width="32" height="32" viewBox="-52 -52 104 104">
          <circle r="52" fill="#0c0a1c" />
          <SiriOrb id="sm" />
        </Extra>
        <Extra $gap={24} width="36" height="20" viewBox="0 0 36 20" fill="#161616">
          <path d="M0 0H4V4H0ZM8 0H36V4H8ZM0 8H4V12H0ZM8 8H30V12H8ZM0 16H4V20H0ZM8 16H36V20H8Z" />
        </Extra>
      </Extras>
    </MenuBar>

    <Window>
      <Toolbar>
        <Lights>
          <Light $c="#ee6b60" $edge="#d65549" />
          <Light $c="#f6be50" $edge="#dba03c" />
          <Light $c="#62c555" $edge="#52a844" />
        </Lights>
        <ToolButton $w={52} aria-label="Back">
          <svg width="16" height="26" viewBox="0 0 16 26"><path d="M13.500 1.500L2 13 13.500 24.500" fill="none" stroke="#6e6e6e" strokeWidth="2.600" /></svg>
        </ToolButton>
        <ToolButton $w={50} $mr={20} aria-label="Forward">
          <svg width="16" height="26" viewBox="0 0 16 26"><path d="M2.500 1.500L14 13 2.500 24.500" fill="none" stroke="#bdbdbd" strokeWidth="2.400" /></svg>
        </ToolButton>
        <ToolButton $w={74} aria-label="Sidebar">
          <svg width="31" height="24" viewBox="0 0 31 24">
            <path d="M1 1H30V23H1ZM11.500 1V23" fill="none" stroke="#6e6e6e" strokeWidth="2" />
            <path d="M4.500 4.500H8V6.500H4.500ZM4.500 8.500H8V10.500H4.500ZM4.500 12.500H8V14.500H4.500Z" fill="#8a8a8a" />
          </svg>
        </ToolButton>
        <AddressField>
          <svg width="17" height="20" viewBox="0 0 17 20"><path d="M4 9V5.500a4.500 4.500 0 0 1 9 0V9" fill="none" stroke="#9a9a9a" strokeWidth="2" /><rect y="8.500" width="17" height="11.500" rx="1" fill="#9a9a9a" /></svg>
          <Host>portal.iitb.ac.in</Host>
          <svg width="24" height="27" viewBox="0 0 24 27"><path d="M12.500 5A10 10 0 1 0 21.800 13.500" fill="none" stroke="#8a8a8a" strokeWidth="2" /><path d="M12 0L20 5.300 12 11Z" fill="#777" /></svg>
        </AddressField>
        <RightTools>
          <ToolButton $w={75} aria-label="Downloads">
            <svg width="28" height="28" viewBox="0 0 28 28"><circle cx="14" cy="14" r="14" fill="#737373" /><path d="M11.800 6H16.200V14H21L14 23 7 14H11.800Z" fill="#fff" /></svg>
          </ToolButton>
          <ToolButton $w={75} aria-label="Share">
            <svg width="24" height="31" viewBox="0 0 24 31" fill="none" stroke="#737373" strokeWidth="2"><path d="M8 11H2.500Q1.500 11 1.500 12V28.500Q1.500 29.500 2.500 29.500H21.500Q22.500 29.500 22.500 28.500V12Q22.500 11 21.500 11H16M12 20.500V2M7 7.500L12 2 17 7.500" /></svg>
          </ToolButton>
          <ToolButton $w={75} aria-label="Tabs">
            <svg width="25" height="25" viewBox="0 0 25 25" fill="none" stroke="#737373" strokeWidth="2"><rect x="1" y="7.500" width="17" height="16.500" rx="1.500" /><path d="M7 4V2.500Q7 1 8.500 1H22.500Q24 1 24 2.500V16Q24 17.500 22.500 17.500H21" /></svg>
          </ToolButton>
        </RightTools>
      </Toolbar>
      <TabBar>
        <Tab>Why does External Asc (iitb.ac.in/asc) show 'Invalid Access' when tried from outside? - Quora</Tab>
        <Tab $active>Change of branch for First Year Students</Tab>
        <NewTab><svg width="22" height="22" viewBox="0 0 22 22"><path d="M11 0V22M0 11H22" stroke="#6b6a6c" strokeWidth="2" /></svg></NewTab>
      </TabBar>
      <Page>
        <TitleRow><Title>Change of branch preferences.</Title></TitleRow>
        {rows.map(r => (
          <InfoRow key={r[0]}>
            <Label $rule="dark">{r[0]}</Label>
            <Cell $rule="dark">{r[1]}</Cell>
            <Label $rule="light">{r[2]}</Label>
            <Cell $rule="light">{r[3]}</Cell>
            <Label $rule="dark">{r[4]}</Label>
            <Cell>{r[5]}</Cell>
          </InfoRow>
        ))}
        <InfoRow>
          <Label $span={3} $rule="light">CPI</Label>
          <Cell $span={3}>8.41</Cell>
        </InfoRow>
        <Pledges>
          <Pledge>
            <PledgeLine>{'I DEVESH KUMAR hereby state that, I propose to complete all the prescribed courses of the first two semesters of the  Dual Degree'}</PledgeLine>
            <PledgeLine $track={0.18}>{'Programme  and I have no backlog course(s) at the end of the First Year.'}</PledgeLine>
          </Pledge>
          <Pledge>
            <PledgeLine $track={-0.04}>I, undertake to abide in the decision of the authorities for granting me change of branch. The branch allotted to me shall</PledgeLine>
            <PledgeLine>be acceptable &amp; binding on me. I will not ask for any further reconsideration under any circumstances.</PledgeLine>
          </Pledge>
          <Pledge>
            <PledgeLine $track={0.2}>I hereby certify that branch change form is being submitted with approval of my parent(s)/guardian(s)</PledgeLine>
          </Pledge>
        </Pledges>
        <Agree><CheckBox type="checkbox" />I Agree</Agree>
        <Outer>
          <PanelHead>Select branch in order of preference</PanelHead>
          <Selector>
            <Panel>
              <PanelHead $inner>Available branches [ <Hint>Select and Drag or Select and click on Arrow</Hint> ]</PanelHead>
              <PanelBody>
                {available.map((b, i) => <Branch key={b}><Num>{i + 1}.</Num><BranchName>{b}</BranchName></Branch>)}
              </PanelBody>
            </Panel>
            <Movers>
              <Mover aria-label="Add"><svg width="18" height="16" viewBox="0 0 18 16"><path d="M0 6H8.500V0L17.500 8 8.500 16V10H0Z" fill="#4c4c4c" /></svg></Mover>
              <Mover aria-label="Remove"><svg width="18" height="16" viewBox="0 0 18 16"><path d="M17.500 6H9V0L0 8 9 16V10H17.500Z" fill="#4c4c4c" /></svg></Mover>
            </Movers>
            <Panel>
              <PanelHead $inner>Select in order of preference</PanelHead>
              <PanelBody>
                {chosen.map((b, i) => <Branch key={b}><Num>{i + 1}.</Num><BranchName $selected={i === 1}>{b}</BranchName></Branch>)}
              </PanelBody>
            </Panel>
          </Selector>
        </Outer>
        <ReportTab>Report Problem</ReportTab>
      </Page>
    </Window>

    <Dock>
      <Finder /><Siri /><Launchpad /><SafariIcon /><Mail /><Calendar /><Notes /><Reminders /><Maps />
      <Photos /><Messages /><FaceTime /><Pages /><Numbers /><Keynote /><ITunes /><AppStore /><Preferences />
      <DockRule />
      <Downloads /><Trash />
    </Dock>
  </Desktop>
);

export default App;
